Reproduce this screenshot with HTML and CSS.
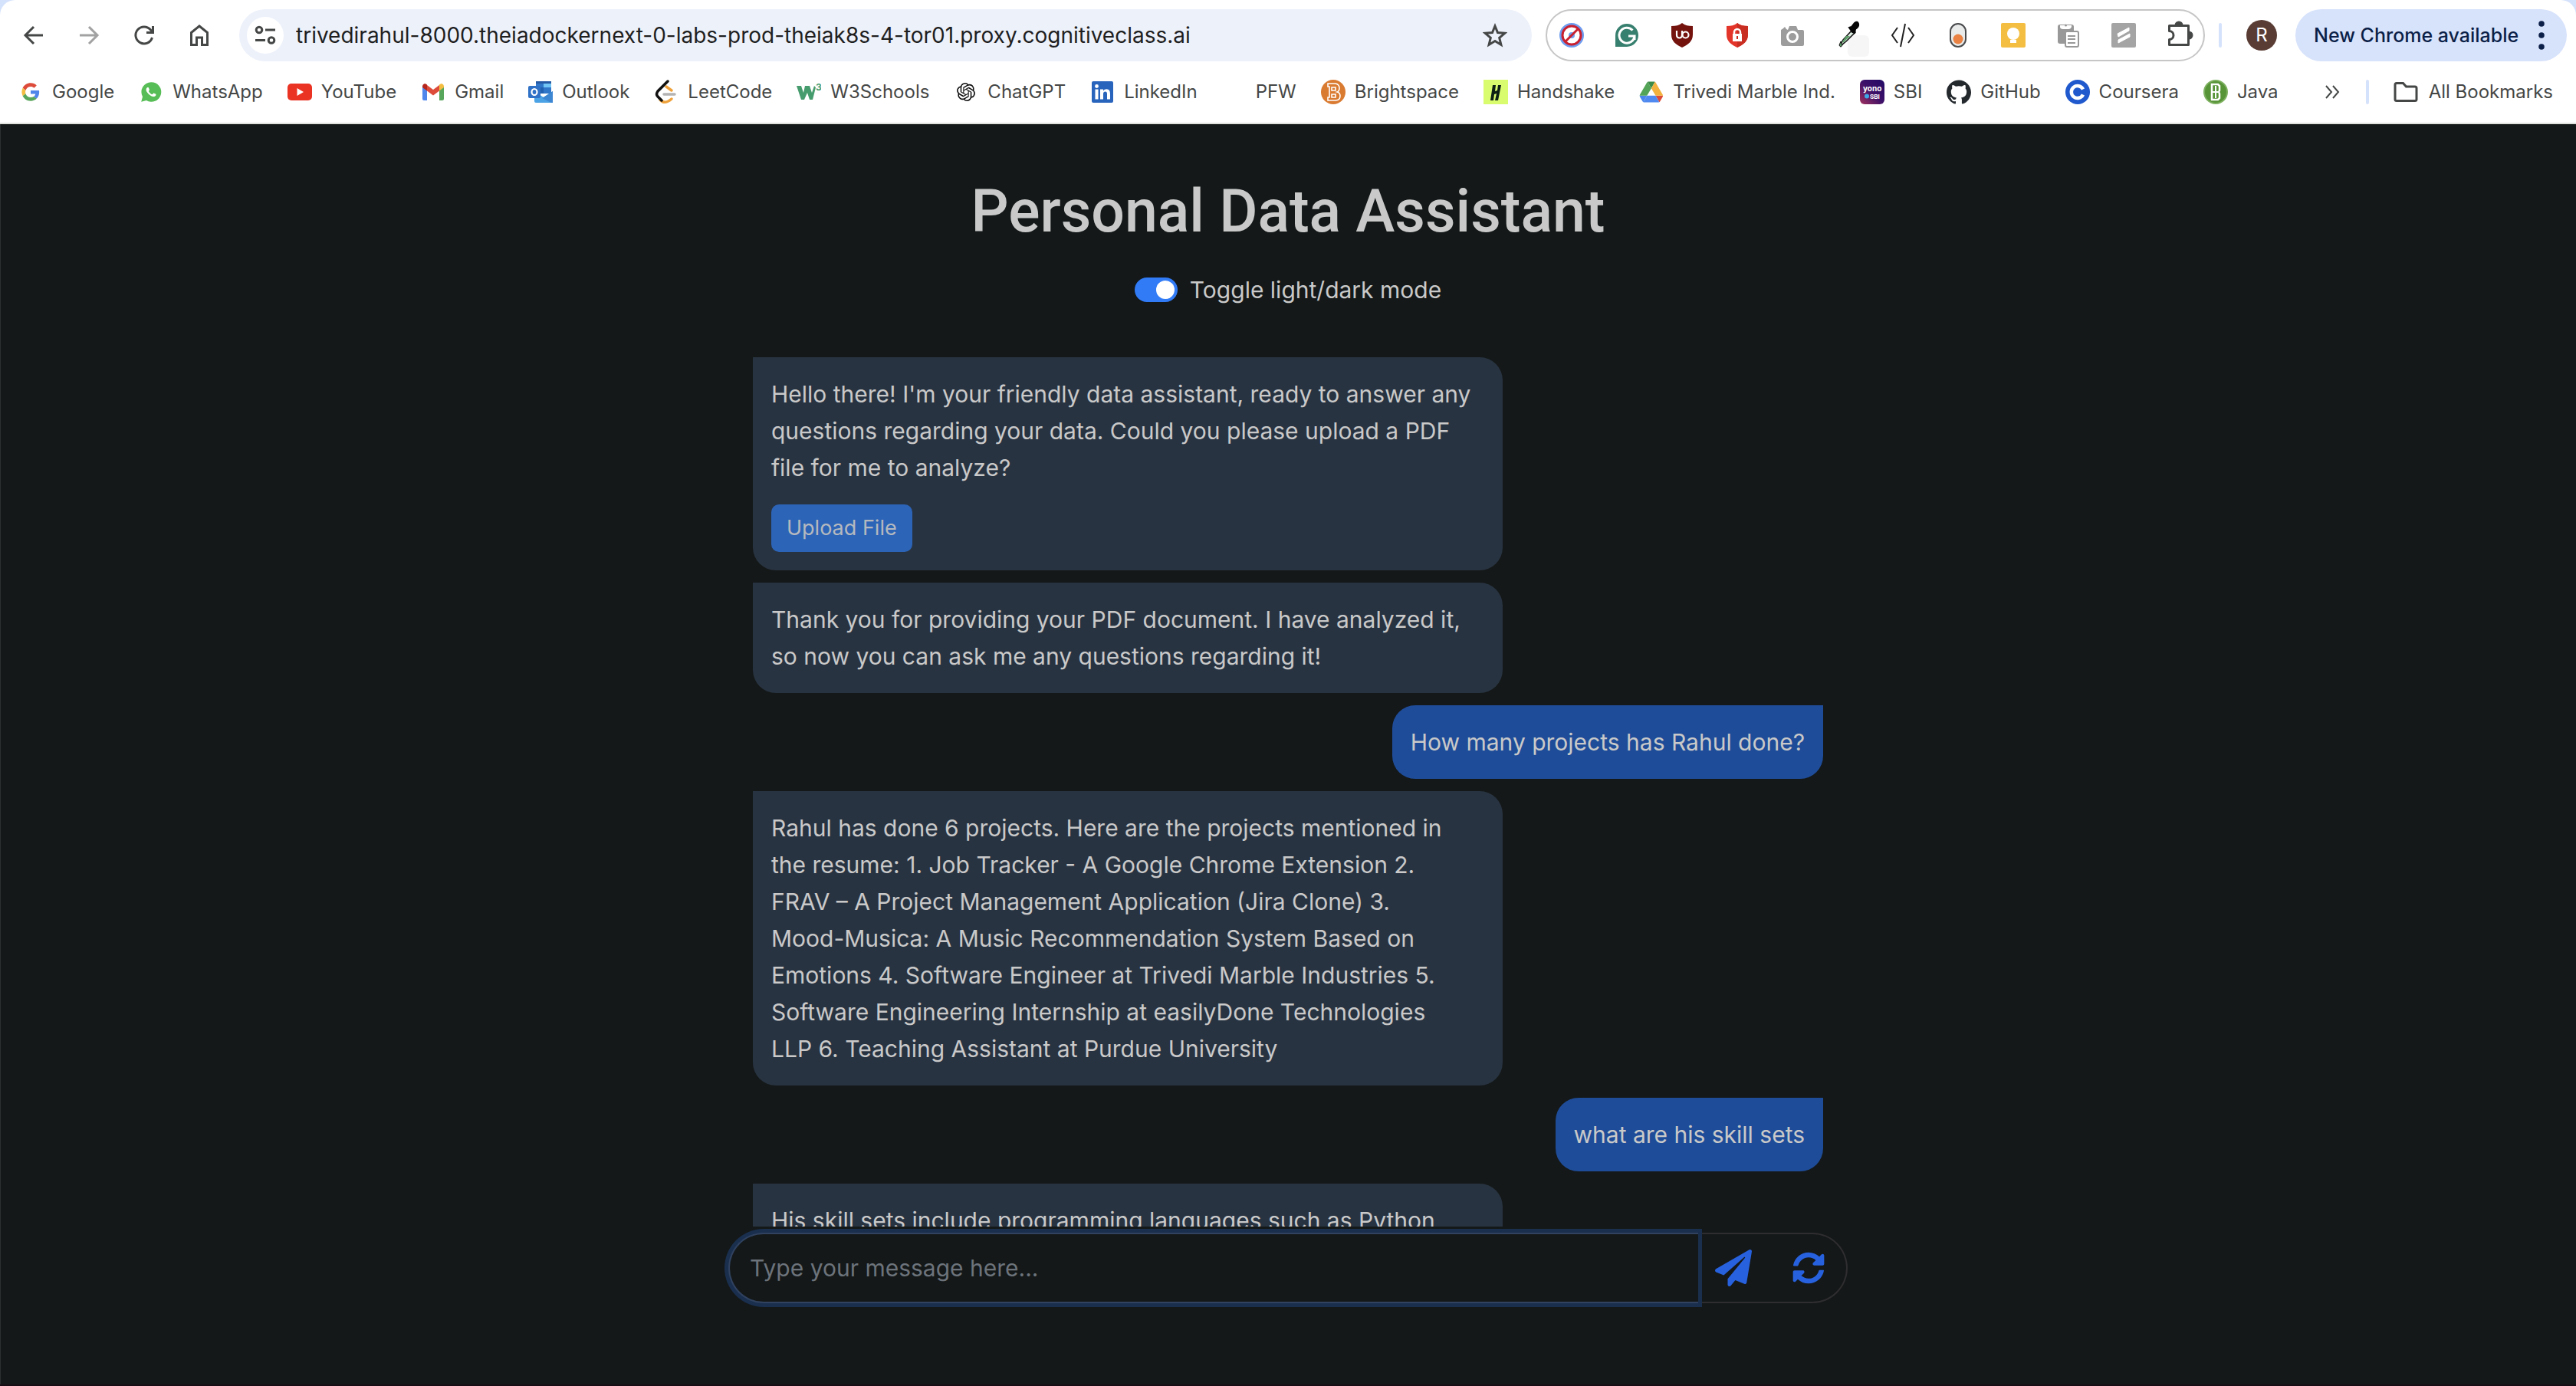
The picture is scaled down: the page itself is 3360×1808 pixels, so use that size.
FILE: index.html
```html
<!DOCTYPE html>
<html lang="en">
<head>
<meta charset="utf-8">
<title>Personal Data Assistant</title>
<link rel="stylesheet" href="styles.css">
</head>
<body>
<header class="browser">
  <div class="browser-inner">
    <div class="toolbar">
      <nav class="nav-buttons" aria-label="Navigation">
        <button class="icon-button" aria-label="Back"><svg class="icon line" viewBox="0 0 32 32"><path d="M28 16H6M16 5L5 16l11 11"/></svg></button>
        <button class="icon-button faded" aria-label="Forward"><svg class="icon line" viewBox="0 0 32 32"><path d="M4 16h22M16 5l11 11-11 11"/></svg></button>
        <button class="icon-button" aria-label="Reload"><svg class="icon line" viewBox="0 0 32 32"><path d="M26.500 19A11 11 0 1 1 24.500 9L27 11.500M27.500 4v8.500H19"/></svg></button>
        <button class="icon-button" aria-label="Home"><svg class="icon line" viewBox="0 0 32 32"><path d="M5.500 28.500V12.500L16 4l10.500 8.500v16h-7V19h-7v9.500z"/></svg></button>
      </nav>
      <div class="omnibox">
        <button class="site-info" aria-label="Site information"><svg class="icon line" viewBox="0 0 32 32"><circle cx="8" cy="9" r="3.800"/><path d="M16 9h13M3 22.500h13"/><circle cx="24" cy="22.500" r="3.800"/></svg></button>
        <input class="address" type="text" aria-label="Address" value="trivedirahul-8000.theiadockernext-0-labs-prod-theiak8s-4-tor01.proxy.cognitiveclass.ai">
        <button class="star" aria-label="Bookmark this page"><svg class="icon line" viewBox="0 0 32 32"><path d="M16 4l3.500 8.600 9.300.7-7.100 6 2.200 9.100L16 23.500l-7.900 4.900 2.200-9.100-7.100-6 9.300-.7z"/></svg></button>
      </div>
      <div class="extensions">
        <button class="icon-button" aria-label="Location guard"><svg class="icon" viewBox="0 0 32 32"><circle cx="16" cy="16" r="16" fill="#6d9cf0"/><circle cx="16" cy="16" r="12" fill="#fff" stroke="#c8202f" stroke-width="3"/><circle cx="16" cy="16" r="4" fill="#6d9cf0"/><path d="M7.500 24.500l17-17" stroke="#c8202f" stroke-width="3"/></svg></button>
        <button class="icon-button" aria-label="Grammarly"><svg class="icon" viewBox="0 0 32 32"><path d="M16 1a15 15 0 1 1 0 30H1V16A15 15 0 0 1 16 1z" fill="#377f6e"/><path d="M23.500 9.500A10 10 0 1 0 26 17h-8M26 17v5" fill="none" stroke="#fff" stroke-width="3"/></svg></button>
        <button class="icon-button" aria-label="uBlock Origin"><svg class="icon" viewBox="0 0 32 32"><path d="M16 0c4 3 8 4 14 4v11c0 9-6 13-14 17C8 28 2 24 2 15V4c6 0 10-1 14-4z" fill="#74120d"/><path d="M9 10v6a3.500 3.500 0 0 0 7 0v-6" fill="none" stroke="#fff" stroke-width="2.200"/><circle cx="20.500" cy="15.500" r="4" fill="none" stroke="#fff" stroke-width="2.200"/></svg></button>
        <button class="icon-button" aria-label="Privacy lock"><svg class="icon" viewBox="0 0 32 32"><path d="M16 0c4 3 8 4 14 4v11c0 9-6 13-14 17C8 28 2 24 2 15V4c6 0 10-1 14-4z" fill="#e33529"/><path d="M16 0c4 3 8 4 14 4v11c0 9-6 13-14 17z" fill="#c92e23"/><path d="M12 15v-3a4 4 0 0 1 8 0v3" fill="none" stroke="#fff" stroke-width="2.500"/><path d="M10 14h12v10H10z" fill="#fff"/><path d="M16 17v4" stroke="#c92e23" stroke-width="2"/></svg></button>
        <button class="icon-button" aria-label="Screenshot"><svg class="icon" viewBox="0 0 32 32"><path d="M1 9l3-2 2-2 2 3 2 1 2-5h9l2 5h6q2 0 2 2v17q0 2-2 2H4q-3 0-3-3z" fill="#9c9c9c"/><circle cx="16" cy="18" r="6.500" fill="#9c9c9c" stroke="#fff" stroke-width="3"/></svg></button>
        <button class="icon-button" aria-label="Color picker"><svg class="icon wide" viewBox="0 0 56 56"><rect x="28" y="28" width="28" height="28" rx="6" fill="#f6f6f6"/><g transform="translate(13 9)"><path d="M21 12L9 25l-3 5 2 1 5-4 12-12z" fill="#dfeee2" stroke="#111" stroke-width="1.500"/><path d="M13 20l-5 7 1 2 9-9z" fill="#5d9d69"/><path d="M17 9l3-1 4-5q4-3 5 1t-4 7l-1 5-3-1z" fill="#060606" stroke="#060606" stroke-width="2"/><path d="M6 27l2 5q-2 4-4 0z" fill="#5d9d69" stroke="#111"/></g></svg></button>
        <button class="icon-button" aria-label="Inspector"><svg class="icon line thin" viewBox="0 0 32 32"><path d="M9 6L2 16l7 10M23 6l7 10-7 10M19 1l-6 30"/></svg></button>
        <button class="icon-button" aria-label="Switcher"><svg class="icon" viewBox="0 0 32 32"><rect x="6" y="1" width="20" height="30" rx="10" fill="#e9ebea" stroke="#494a4c" stroke-width="2"/><circle cx="16" cy="21" r="6.500" fill="#e98242"/></svg></button>
        <button class="icon-button" aria-label="Keep"><svg class="icon" viewBox="0 0 32 32"><rect width="32" height="32" rx="2" fill="#f3be42"/><circle cx="16" cy="14" r="8" fill="#fff"/><path d="M12 18h8v3h-8zM12 22h8v4h-8z" fill="#fff"/></svg></button>
        <button class="icon-button" aria-label="Clipboard"><svg class="icon" viewBox="0 0 32 32"><rect x="2" y="2" width="21" height="25" rx="3" fill="#989898"/><path d="M5 3h15v2q-1 3-4 3H9Q5 8 5 5z" fill="#fff"/><circle cx="12.500" cy="3" r="1.500" fill="#989898"/><rect x="12" y="11" width="17" height="20" rx="2" fill="#fff" stroke="#989898" stroke-width="2"/><path d="M15 17h10M15 21h10M15 26h10" stroke="#989898" stroke-width="2"/></svg></button>
        <button class="icon-button" aria-label="Scribe"><svg class="icon" viewBox="0 0 32 32"><rect width="32" height="32" rx="2" fill="#a4a4a4"/><path d="M8 14L23 6v4l-14 8zM9 22l15-8v4L9 26z" fill="#fff" stroke="#fff"/></svg></button>
        <button class="icon-button" aria-label="Extensions"><svg class="icon line puzzle" viewBox="0 0 32 32"><path d="M3.500 3.500h25v25h-25v-7a5 5 0 0 0 0-11z"/><path d="M12 3a4 4 0 0 1 8 0zM29 12a4 4 0 0 1 0 8z" fill="#454746"/></svg></button>
      </div>
      <span class="divider"></span>
      <button class="avatar" aria-label="Profile">R</button>
      <button class="update">New Chrome available<svg class="dots" viewBox="0 0 8 32"><circle cx="4" cy="4" r="3"/><circle cx="4" cy="16" r="3"/><circle cx="4" cy="28" r="3"/></svg></button>
    </div>
    <div class="bookmarks">
      <nav class="bookmark-list" aria-label="Bookmarks">
        <a href="#google"><svg class="icon" viewBox="-8 -9 64 66"><path fill="#dd4b3a" d="M24 9.500c3.540 0 6.710 1.220 9.210 3.600l6.850-6.850C35.900 2.380 30.470 0 24 0 14.620 0 6.510 5.380 2.560 13.220l7.980 6.190C12.430 13.720 17.740 9.500 24 9.500z"/><path fill="#4f86ec" d="M46.980 24.550c0-1.570-.15-3.090-.38-4.550H24v9.020h12.940c-.58 2.960-2.260 5.480-4.780 7.180l7.730 6c4.510-4.180 7.090-10.360 7.090-17.650z"/><path fill="#f3bd42" d="M10.530 28.590c-.48-1.450-.76-2.990-.76-4.590s.27-3.140.76-4.590l-7.980-6.190C.92 16.460 0 20.120 0 24c0 3.880.92 7.540 2.560 10.780l7.970-6.190z"/><path fill="#58a55c" d="M24 48c6.480 0 11.930-2.130 15.890-5.810l-7.730-6c-2.150 1.450-4.920 2.300-8.160 2.300-6.260 0-11.570-4.220-13.470-9.910l-7.980 6.190C6.510 42.620 14.620 48 24 48z"/></svg>Google</a>
        <a href="#whatsapp"><svg class="icon" viewBox="-3 -3 30 30"><path fill="#57bd56" d="M12 0a12 12 0 1 1-5.700 22.300L0 24l1.700-6.200A12 12 0 0 1 12 0z"/><path fill="#fff" d="M17.472 14.382c-.297-.149-1.758-.867-2.030-.967-.273-.099-.471-.148-.67.15-.197.297-.767.966-.94 1.164-.173.199-.347.223-.644.075-.297-.15-1.255-.463-2.390-1.475-.883-.788-1.480-1.761-1.653-2.059-.173-.297-.018-.458.13-.606.134-.133.298-.347.446-.52.149-.174.198-.298.298-.497.099-.198.05-.371-.025-.52-.075-.149-.669-1.612-.916-2.207-.242-.579-.487-.5-.669-.51-.173-.008-.371-.01-.57-.01-.198 0-.52.074-.792.372-.272.297-1.040 1.016-1.040 2.479 0 1.462 1.065 2.875 1.213 3.074.149.198 2.096 3.200 5.077 4.487.709.306 1.262.489 1.694.625.712.227 1.360.195 1.871.118.571-.085 1.758-.719 2.006-1.413.248-.694.248-1.289.173-1.413-.074-.124-.272-.198-.57-.347z"/></svg>WhatsApp</a>
        <a href="#youtube"><svg class="icon" viewBox="0 0 32 32"><rect y="5" width="32" height="22" rx="5" fill="#ea3323"/><path d="M12.500 11v10l8.500-5z" fill="#fff"/></svg>YouTube</a>
        <a href="#gmail"><svg class="icon" viewBox="0 0 32 32"><path d="M2 9l6 4v14H4q-2 0-2-2z" fill="#4f86ec"/><path d="M30 9l-6 4v14h4q2 0 2-2z" fill="#58a55c"/><path d="M8 7l8 6 8-6v7.500l-8 6-8-6z" fill="#dd4b3a"/><path d="M2 9q0-3 3-4 1.500 0 3 1.500v8L2 10z" fill="#b5271d"/><path d="M30 9q0-3-3-4-1.500 0-3 1.500v8l6-4.500z" fill="#f3bd42"/></svg>Gmail</a>
        <a href="#outlook"><svg class="icon" viewBox="0 0 32 32"><path d="M10 2h20v16H10z" fill="#3177c9"/><path d="M20 2h10v8H20z" fill="#71c6f5"/><path d="M10 2h20v3H10z" fill="#2459a4"/><path d="M10 10h10v8H10z" fill="#2261b0"/><path d="M8 15l12 8 12-8v13q0 2-2 2H10q-2 0-2-2z" fill="#4ba3e6"/><path d="M32 15L18 24l12 6h2z" fill="#3c86d2"/><rect y="8" width="16" height="16" rx="2" fill="#2f71c6"/><ellipse cx="8" cy="16" rx="3.500" ry="4" fill="none" stroke="#fff" stroke-width="2.200"/></svg>Outlook</a>
        <a href="#leetcode"><svg class="icon" viewBox="0 0 32 32" fill="none" stroke-width="3.500" stroke-linecap="round"><path d="M16 9l7 5M8 26q6 7 15-1" stroke="#efa23b"/><path d="M13 19h14" stroke="#b3b3b3"/><path d="M18 2L5 15q-3 4 0 7l5 5" stroke="#111"/></svg>LeetCode</a>
        <a href="#w3schools"><svg class="icon" viewBox="0 0 32 32"><path d="M0 8h6l3 9 2-9h6l3 9 3-9 2 2-4 16h-4l-3-9-4 9H6z" fill="#479c6e"/><text x="25" y="14" class="mark" font-size="12" fill="#479c6e">3</text></svg>W3Schools</a>
        <a href="#chatgpt"><svg class="icon" viewBox="-4 -4 32 32"><path fill="#111" d="M22.282 9.821a5.985 5.985 0 0 0-.516-4.910 6.046 6.046 0 0 0-6.510-2.900A6.065 6.065 0 0 0 4.981 4.182a5.985 5.985 0 0 0-3.998 2.900 6.046 6.046 0 0 0 .743 7.097 5.980 5.980 0 0 0 .511 4.911 6.051 6.051 0 0 0 6.515 2.900A5.985 5.985 0 0 0 13.260 24a6.056 6.056 0 0 0 5.772-4.206 5.989 5.989 0 0 0 3.998-2.900 6.056 6.056 0 0 0-.748-7.073zm-9.022 12.608a4.476 4.476 0 0 1-2.876-1.041l.142-.08 4.778-2.758a.795.795 0 0 0 .393-.681v-6.737l2.020 1.169a.071.071 0 0 1 .038.052v5.583a4.504 4.504 0 0 1-4.495 4.494zm-9.661-4.125a4.471 4.471 0 0 1-.535-3.014l.142.085 4.783 2.758a.771.771 0 0 0 .781 0l5.843-3.369v2.332a.08.08 0 0 1-.033.062L9.740 19.950a4.499 4.499 0 0 1-6.141-1.646zM2.341 7.896a4.485 4.485 0 0 1 2.365-1.973V11.600a.766.766 0 0 0 .388.677l5.814 3.354-2.020 1.169a.076.076 0 0 1-.071 0l-4.830-2.787A4.504 4.504 0 0 1 2.341 7.872zm16.596 3.856L13.104 8.364 15.119 7.200a.076.076 0 0 1 .071 0l4.830 2.791a4.494 4.494 0 0 1-.676 8.104v-5.677a.79.79 0 0 0-.407-.667zm2.011-3.023l-.142-.085-4.774-2.782a.776.776 0 0 0-.785 0L9.409 9.230V6.897a.066.066 0 0 1 .028-.061l4.830-2.787a4.499 4.499 0 0 1 6.680 4.660zM8.307 12.863l-2.020-1.164a.08.08 0 0 1-.038-.057V6.074a4.499 4.499 0 0 1 7.376-3.454l-.142.081L8.704 5.459a.795.795 0 0 0-.393.681zm1.098-2.365l2.602-1.500 2.607 1.500v2.999l-2.597 1.500-2.607-1.500z"/></svg>ChatGPT</a>
        <a href="#linkedin"><svg class="icon" viewBox="0 0 32 32"><rect x="2" y="2" width="28" height="28" rx="2" fill="#2964bc"/><path d="M6.500 12.500h4v13h-4zM13 12.500h4v2q1.500-2.300 4.500-2.300 4.500 0 4.500 6v7.300h-4v-7q0-3-2.300-3-2.700 0-2.700 3v7h-4z" fill="#fff"/><circle cx="8.500" cy="8.500" r="2.400" fill="#fff"/></svg>LinkedIn</a>
        <a href="#pfw"><svg class="icon" viewBox="0 0 32 32"></svg>PFW</a>
        <a href="#brightspace"><svg class="icon" viewBox="0 0 32 32"><circle cx="16" cy="16" r="16" fill="#da7b32"/><path d="M9 5h10q5 1 5 6 0 4-3 5 4 1 4 5 0 6-6 6H9v-4h2V9H9zM14 10v4h5v-4zM14 19v4h5v-4z" fill="none" stroke="#fff" stroke-width="1.600"/></svg>Brightspace</a>
        <a href="#handshake"><svg class="icon" viewBox="0 0 32 32"><path d="M0 0h32v32H0z" fill="#d9fb6e"/><path d="M12 7h4l-1 8 3-1 1-7h4l-4 20h-4l2-9-3 1-1 8H9z" fill="#0c2014"/></svg>Handshake</a>
        <a href="#drive"><svg class="icon" viewBox="-2 -6 92 90"><path d="M6.600 66.850l3.850 6.650c.8 1.400 1.950 2.500 3.300 3.300L27.500 53H0c0 1.550.4 3.100 1.200 4.500z" fill="#4a86ec"/><path d="M43.650 25L29.900 1.200c-1.350.8-2.500 1.900-3.300 3.300l-25.400 44A9.060 9.060 0 0 0 0 53h27.500z" fill="#54a458"/><path d="M73.550 76.800c1.350-.8 2.500-1.900 3.300-3.300l9.250-16c.8-1.400 1.200-2.950 1.200-4.500H59.800z" fill="#dc4b39"/><path d="M43.650 25L57.400 1.200C56.050.4 54.500 0 52.900 0H34.400c-1.600 0-3.150.45-4.500 1.200z" fill="#3c8a46"/><path d="M59.800 53H27.500L13.750 76.800c1.350.8 2.900 1.200 4.500 1.200h50.800c1.600 0 3.150-.45 4.500-1.200z" fill="#5089f0"/><path d="M73.400 26.500l-12.700-22c-.8-1.400-1.950-2.500-3.300-3.300L43.650 25 59.800 53h27.450c0-1.550-.4-3.100-1.200-4.500z" fill="#f2b23d"/></svg>Trivedi Marble Ind.</a>
        <a href="#sbi"><svg class="icon" viewBox="0 0 32 32"><defs><linearGradient id="yono" x1="0" y1="1" x2="1" y2="0"><stop offset="0" stop-color="#a2325f"/><stop offset=".5" stop-color="#3d1068"/><stop offset="1" stop-color="#230b66"/></linearGradient></defs><rect width="32" height="32" rx="6" fill="url(#yono)"/><text x="4" y="15" class="mark" font-size="10" fill="#fff">yono</text><circle cx="9" cy="21.500" r="3" fill="#3fa9e8"/><text x="13" y="25" class="mark" font-size="8" fill="#fff">SBI</text></svg>SBI</a>
        <a href="#github"><svg class="icon" viewBox="0 0 24 24"><path fill="#24292e" d="M12 .297c-6.630 0-12 5.373-12 12 0 5.303 3.438 9.800 8.205 11.385.6.113.82-.258.82-.577 0-.285-.01-1.040-.015-2.040-3.338.724-4.042-1.610-4.042-1.610C4.422 18.070 3.633 17.700 3.633 17.700c-1.087-.744.084-.729.084-.729 1.205.084 1.838 1.236 1.838 1.236 1.070 1.835 2.809 1.305 3.495.998.108-.776.417-1.305.76-1.605-2.665-.3-5.466-1.332-5.466-5.930 0-1.310.465-2.380 1.235-3.220-.135-.303-.54-1.523.105-3.176 0 0 1.005-.322 3.300 1.230.96-.267 1.980-.399 3-.405 1.020.006 2.040.138 3 .405 2.280-1.552 3.285-1.230 3.285-1.230.645 1.653.24 2.873.12 3.176.765.84 1.230 1.910 1.230 3.220 0 4.610-2.805 5.625-5.475 5.920.42.36.81 1.096.81 2.220 0 1.606-.015 2.896-.015 3.286 0 .315.21.69.825.57C20.565 22.092 24 17.592 24 12.297c0-6.627-5.373-12-12-12"/></svg>GitHub</a>
        <a href="#coursera"><svg class="icon" viewBox="0 0 32 32"><circle cx="16" cy="16" r="16" fill="#1f59cd"/><path d="M23 12.500a8 8 0 1 0 0 7" fill="none" stroke="#fff" stroke-width="4.500"/></svg>Coursera</a>
        <a href="#java"><svg class="icon" viewBox="0 0 32 32"><circle cx="16" cy="16" r="15" fill="#579337" stroke="#7db05f" stroke-width="2"/><path d="M11 6h8l2 2v6l-1 2 1 2v6l-2 2h-8z" fill="#579337" stroke="#fff" stroke-width="2.500"/><path d="M16 8v16M12 16h8" stroke="#fff" stroke-width="2"/></svg>Java</a>
      </nav>
      <button class="more" aria-label="More bookmarks"><svg viewBox="0 0 20 20"><path d="M2 2l7 8-7 8M11 2l7 8-7 8"/></svg></button>
      <span class="divider"></span>
      <a class="all-bookmarks" href="#bookmarks"><svg class="icon line" viewBox="0 0 32 32"><path d="M4 4.500h8.500l4 4.500H28q2 0 2 2v14.500q0 2-2 2H4q-2 0-2-2v-19q0-2 2-2z"/></svg>All Bookmarks</a>
    </div>
  </div>
</header>
<main class="page">
  <h1>Personal Data Assistant</h1>
  <label class="mode"><input type="checkbox" role="switch" checked>Toggle light/dark mode</label>
  <section class="chat" aria-label="Conversation">
    <div class="message bot">
      <p>Hello there! I'm your friendly data assistant, ready to answer any questions regarding your data. Could you please upload a PDF file for me to analyze?</p>
      <button class="upload">Upload File</button>
    </div>
    <div class="message bot"><p>Thank you for providing your PDF document. I have analyzed it, so now you can ask me any questions regarding it!</p></div>
    <div class="message user"><p>How many projects has Rahul done?</p></div>
    <div class="message bot"><p>Rahul has done 6 projects. Here are the projects mentioned in<br>the resume: 1. Job Tracker - A Google Chrome Extension 2.<br>FRAV – A Project Management Application (Jira Clone) 3.<br>Mood-Musica: A Music Recommendation System Based on<br>Emotions 4. Software Engineer at Trivedi Marble Industries 5.<br>Software Engineering Internship at easilyDone Technologies<br>LLP 6. Teaching Assistant at Purdue University</p></div>
    <div class="message user"><p>what are his skill sets</p></div>
    <div class="message bot"><p>His skill sets include programming languages such as Python</p></div>
  </section>
  <form class="composer">
    <input type="text" aria-label="Message" placeholder="Type your message here...">
    <button type="button" class="send" aria-label="Send"><svg viewBox="0 0 512 512"><path d="M476 3.200L12.500 270.600c-18.100 10.400-15.800 35.600 2.200 43.200L121 358.400l287.300-253.200c5.500-4.900 13.300 2.600 8.600 8.300L176 407v80.500c0 23.600 28.500 32.900 42.500 15.800L282 426l124.600 52.200c14.200 6 30.400-2.900 33-18.200l72-432C515 7.800 493.300-6.800 476 3.200z"/></svg></button>
    <button type="button" class="reset" aria-label="Reset"><svg viewBox="0 0 512 512"><path d="M370.720 133.280C339.458 104.008 298.888 87.962 255.848 88c-77.458.068-144.328 53.178-162.791 126.850-1.344 5.363-6.122 9.150-11.651 9.150H24.103c-7.498 0-13.194-6.807-11.807-14.176C33.933 94.924 134.813 8 256 8c66.448 0 126.791 26.136 171.315 68.685L463.030 40.970C478.149 25.851 504 36.559 504 57.941V192c0 13.255-10.745 24-24 24H345.941c-21.382 0-32.090-25.851-16.971-40.971l41.750-41.749zM32 296h134.059c21.382 0 32.090 25.851 16.971 40.971l-41.750 41.750c31.262 29.273 71.835 45.319 114.876 45.280 77.418-.07 144.315-53.144 162.787-126.849 1.344-5.363 6.122-9.150 11.651-9.150h57.304c7.498 0 13.194 6.807 11.807 14.176C478.067 417.076 377.187 504 256 504c-66.448 0-126.791-26.136-171.315-68.685L48.970 471.030C33.851 486.149 8 475.441 8 454.059V320c0-13.255 10.745-24 24-24z"/></svg></button>
  </form>
</main>
</body>
</html>
```
FILE: styles.css
```css
* { box-sizing: border-box; }

body {
  margin: 0;
  height: 100vh;
  display: flex;
  flex-direction: column;
  background: #141818;
  color: #c9c9c9;
  font-family: Inter, "Liberation Sans", sans-serif;
  font-size: 30px;
  line-height: 48px;
}

button, input { font: inherit; color: inherit; }
button { padding: 0; border: 0; background: none; }
p { margin: 0; }

/* Browser bars */
.browser { background: #d5e2fb; color: #454746; }
.browser-inner {
  background: #fff;
  border-radius: 20px 20px 0 0;
  border-bottom: 2px solid #dfe1dc;
  padding-bottom: 12px;
}
.toolbar { display: flex; align-items: center; height: 92px; padding: 0 12px 0 20px; }
.nav-buttons { display: flex; gap: 24px; margin-right: 28px; }
.icon-button { width: 48px; height: 48px; display: flex; align-items: center; justify-content: center; }
.faded { opacity: .5; }
.icon { width: 32px; height: 32px; flex: none; display: block; }
.wide { width: 56px; height: 56px; }
.line { fill: none; stroke: #454746; stroke-width: 3; }
.thin { stroke: #222; stroke-width: 2; }
.puzzle { overflow: visible; stroke-linejoin: round; }
.mark { font-family: Inter, sans-serif; font-weight: 700; }

.omnibox {
  flex: 1;
  height: 68px;
  display: flex;
  align-items: center;
  padding: 0 32px 0 10px;
  border-radius: 34px;
  background: #edf1fa;
}
.site-info { width: 48px; height: 48px; border-radius: 50%; background: #fff; display: grid; place-items: center; }
.address {
  flex: 1;
  min-width: 0;
  margin-left: 16px;
  padding: 0;
  border: 0;
  outline: 0;
  background: none;
  color: #1f1f1f;
  font-size: 28px;
}
.extensions {
  height: 68px;
  display: flex;
  align-items: center;
  gap: 24px;
  margin-left: 18px;
  padding: 0 8px;
  border: 2px solid #c6c6c6;
  border-radius: 34px;
}
.divider { width: 4px; height: 32px; border-radius: 2px; background: #d5e2fb; }
.toolbar .divider { margin: 0 32px 0 18px; }
.avatar { width: 40px; height: 40px; border-radius: 50%; background: #593d35; color: #fff; font-size: 24px; line-height: 40px; }
.update {
  height: 68px;
  display: flex;
  align-items: center;
  justify-content: space-between;
  width: 354px;
  margin-left: 24px;
  padding: 0 28px 0 24px;
  border-radius: 34px;
  background: #d7e2fb;
  color: #0b1f47;
  font-size: 25px;
  font-weight: 500;
}
.dots { width: 10px; height: 44px; fill: #0b1f47; }

.bookmarks { display: flex; align-items: center; height: 56px; padding: 0 30px 0 24px; font-size: 24px; }
.bookmarks a { display: flex; align-items: center; gap: 12px; color: inherit; text-decoration: none; white-space: nowrap; }
.bookmark-list { flex: 1; display: flex; justify-content: space-between; }
.more { margin: 0 34px 0 60px; }
.more svg { display: block; width: 20px; height: 22px; fill: none; stroke: #454746; stroke-width: 2; }
.bookmarks .all-bookmarks { margin-left: 32px; gap: 14px; }

/* Assistant page */
.page {
  flex: 1;
  min-height: 0;
  display: flex;
  flex-direction: column;
  align-items: center;
  padding: 66px 0 106px;
  box-shadow: inset 1px 0 0 #2b2f30;
  border-bottom: 2px solid #170d14;
}
h1 { margin: 0; font-family: Roboto, Inter, sans-serif; font-size: 77px; line-height: 96px; font-weight: 500; }
.mode { display: flex; align-items: center; gap: 16px; margin-top: 30px; }
.mode input {
  appearance: none;
  width: 56px;
  height: 32px;
  margin: 0;
  padding: 4px;
  border-radius: 16px;
  background: #317bf7;
  display: flex;
  justify-content: flex-end;
}
.mode input::before { content: ""; width: 24px; height: 24px; border-radius: 50%; background: #fff; }

.chat {
  flex: 1;
  min-height: 0;
  width: 1396px;
  max-width: 100%;
  margin-top: 64px;
  overflow: hidden;
  display: flex;
  flex-direction: column;
  gap: 16px;
}
.message { flex: none; padding: 24px; }
.bot { width: 978px; max-width: 100%; border-radius: 0 30px 30px 30px; background: #283341; }
.user { align-self: flex-end; border-radius: 30px 0 30px 30px; background: #1f4c98; }
.upload {
  display: block;
  height: 62px;
  margin-top: 24px;
  padding: 0 20px;
  border-radius: 10px;
  background: #2c64b7;
  color: #b5b9bf;
  font-size: 27px;
}

.composer {
  width: 1460px;
  max-width: 100%;
  height: 92px;
  margin-top: 8px;
  display: flex;
  border-radius: 46px;
  box-shadow: inset 0 0 0 2px #2f2d2f;
}
.composer input {
  flex: 1;
  min-width: 0;
  padding: 0 26px;
  border: 2px solid #30425f;
  border-right: 0;
  border-radius: 46px 0 0 46px;
  outline: 0;
  background: #141818;
  box-shadow: 0 0 0 5px #1a2f4e;
}
.composer input::placeholder { color: #6c737b; opacity: 1; }
.composer button { display: grid; place-items: center; }
.composer svg { fill: #2761dd; }
.send { width: 92px; }
.send svg { width: 48px; height: 48px; }
.reset { width: 103px; }
.reset svg { width: 42px; height: 42px; }
```
